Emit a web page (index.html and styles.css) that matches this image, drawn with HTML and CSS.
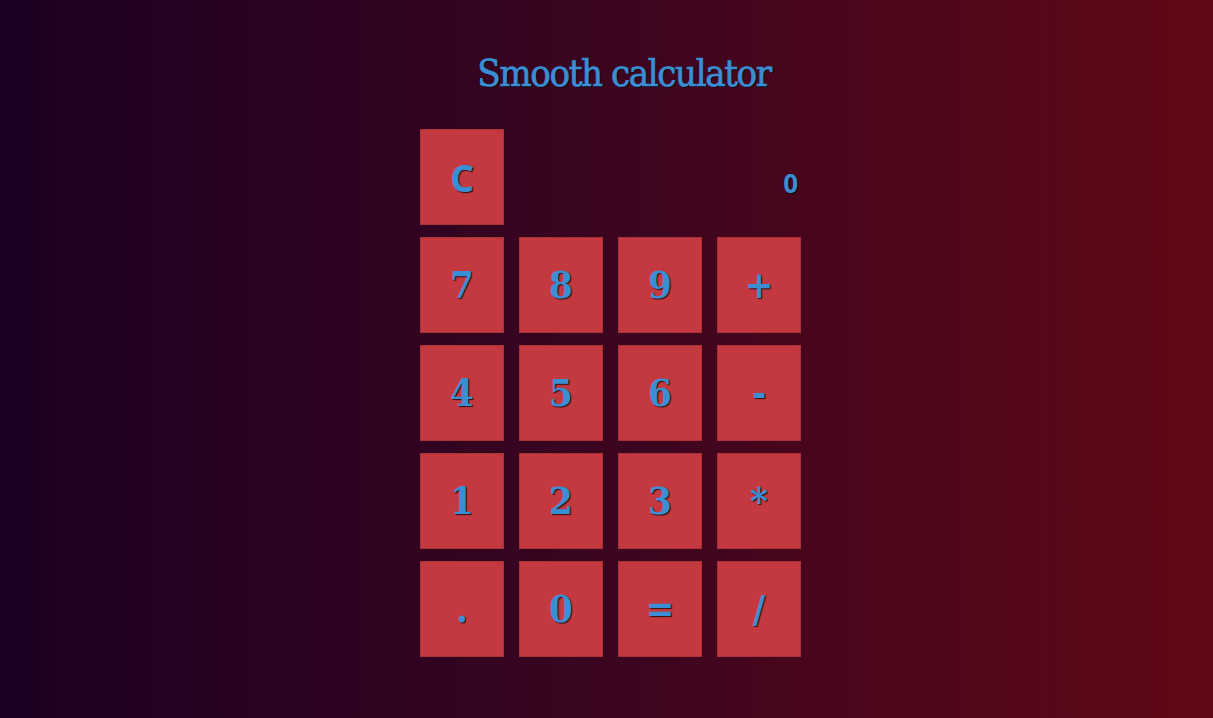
FILE: index.html
```html
<!DOCTYPE html>
<html>
<head>
<meta charset="utf-8">
<title>Smooth calculator</title>
<link rel="stylesheet" href="styles.css">
</head>
<body>
<div class="page">
  <h1 class="title">Smooth calculator</h1>
  <div class="calc">
    <button class="key key-clear">C</button>
    <div class="display">0</div>
    <button class="key">7</button>
    <button class="key">8</button>
    <button class="key">9</button>
    <button class="key">+</button>
    <button class="key">4</button>
    <button class="key">5</button>
    <button class="key">6</button>
    <button class="key">-</button>
    <button class="key">1</button>
    <button class="key">2</button>
    <button class="key">3</button>
    <button class="key">*</button>
    <button class="key">.</button>
    <button class="key">0</button>
    <button class="key">=</button>
    <button class="key">/</button>
  </div>
</div>
</body>
</html>
```
FILE: styles.css
```css
html, body {
  margin: 0;
  padding: 0;
}
body {
  width: 1213px;
  height: 718px;
  background: linear-gradient(to right, #1b0021 0%, #3b0520 50%, #610815 100%);
  overflow: hidden;
}
.page {
  display: flex;
  flex-direction: column;
  align-items: flex-start;
  padding-left: 420px;
}
.title {
  margin: 0 0 0 -1px;
  padding-top: 53px;
  height: 129px;
  box-sizing: border-box;
  width: 410px;
  text-align: center;
  font-family: "DejaVu Serif Condensed", "DejaVu Serif", serif;
  font-stretch: condensed;
  font-weight: normal;
  font-size: 38px;
  letter-spacing: -1.4px;
  line-height: 40px;
  color: #3a8ed4;
  -webkit-text-stroke: 0.7px #3a8ed4;
  text-shadow: 1px 1px 1px rgba(0, 0, 0, 0.8);
}
.calc {
  display: grid;
  grid-template-columns: repeat(4, 84px);
  grid-auto-rows: 96px;
  column-gap: 15px;
  row-gap: 12px;
}
.key {
  margin: 0;
  padding: 0;
  border: 1px solid #ab3139;
  background: #c4393f;
  color: #3a8ed4;
  font-family: "DejaVu Serif Condensed", "DejaVu Serif", serif;
  font-stretch: condensed;
  font-weight: bold;
  font-size: 38px;
  line-height: 1;
  text-shadow: 1px 1px 1px rgba(0, 0, 0, 0.75);
  cursor: pointer;
}
.key.key-clear {
  font-family: "Liberation Sans Narrow", "Open Sans", sans-serif;
  font-stretch: normal;
  font-weight: bold;
  font-size: 38px;
}
.display {
  grid-column: 2 / 5;
  display: flex;
  align-items: center;
  justify-content: flex-end;
  padding: 12px 3px 0 0;
  font-family: "Liberation Sans Narrow", "Open Sans", sans-serif;
  font-weight: bold;
  font-size: 26px;
  color: #3a8ed4;
  text-shadow: 1px 1px 1px rgba(0, 0, 0, 0.75);
}
```
